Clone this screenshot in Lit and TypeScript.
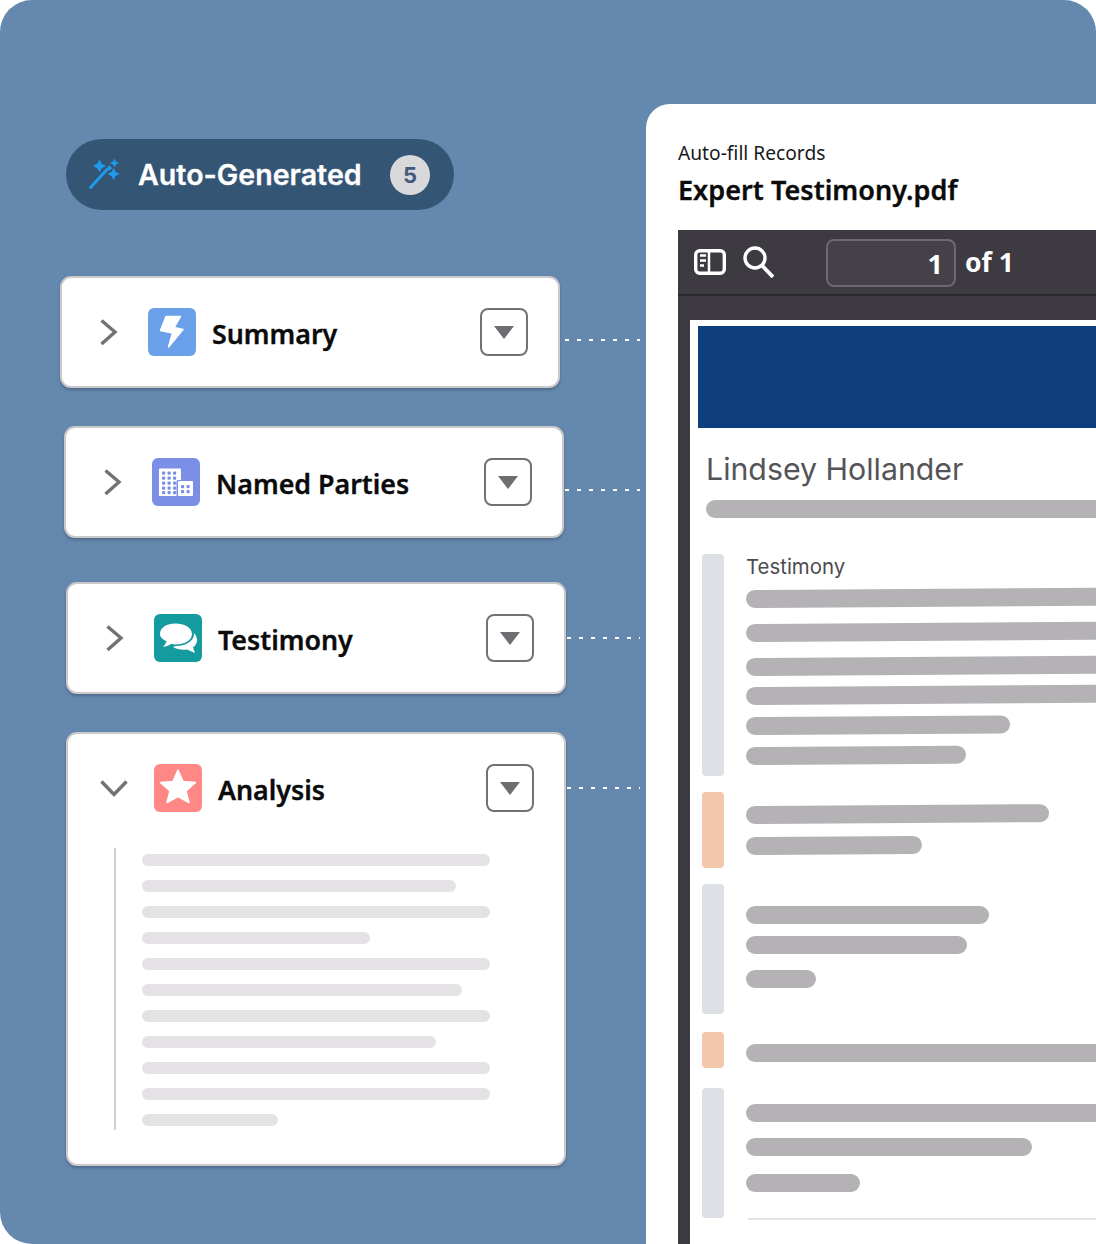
import { LitElement, html, css, svg } from "lit";
import { customElement } from "lit/decorators.js";

const chevR = svg`<svg width="32" height="48" viewBox="0 0 32 48"><path d="M9.500 12.500 23 24 9.500 36" fill="none" stroke="#737174" stroke-width="3.400"/></svg>`;
const chevD = svg`<svg width="32" height="48" viewBox="0 0 32 48"><path d="M3.500 17.500 16 30.500 28.500 17.500" fill="none" stroke="#737174" stroke-width="3.400"/></svg>`;
const bolt = svg`<svg width="48" height="48" viewBox="0 0 48 48"><rect width="48" height="48" rx="6" fill="#6a9fe9"/><path d="M18 8.500H32.500L26 19.500 35 21.500 20.500 39 24.500 25 12.500 22.500Z" fill="#fff" stroke="#fff" stroke-width="1.500" stroke-linejoin="round"/></svg>`;
const bldDots = (xs: number[], ys: number[]) => ys.flatMap((y) => xs.map((x) => svg`<rect x=${x} y=${y} width="3.200" height="3.200" rx="1" fill="#7b8fe6"/>`));
const bld = svg`<svg width="48" height="48" viewBox="0 0 48 48"><rect width="48" height="48" rx="6" fill="#7b8fe6"/><path d="M7 11.500a1 1 0 0 1 1-1H28a1 1 0 0 1 1 1V38H7Z" fill="#fff"/><rect x="24.500" y="22" width="17" height="17" rx="1.500" fill="#7b8fe6"/><rect x="26" y="23" width="15" height="15" rx="1" fill="#fff"/>${bldDots([10, 15.500, 21], [13.500, 18.500, 23.500, 28.500, 33])}${bldDots([29, 34.500], [27, 32])}</svg>`;
const chat = svg`<svg width="48" height="48" viewBox="0 0 48 48"><rect width="48" height="48" rx="6" fill="#149b9f"/><path d="M31 14C38 16 43 20.500 43 26 43 29 41.500 31.500 39 33.500L41 39 33 35.500C28 36 23 35.500 19 33 27 31 33 24 31 14Z" fill="#fff"/><path d="M22 8C31 8 40 12.500 40 20 40 27.500 31 32 22 32 20 32 19 32 17.500 31.500 15 33 12 34.500 6.500 34 8.500 32 10 30.500 10.500 28 7 26.500 4.500 23.500 4.500 20 4.500 12.500 13 8 22 8Z" fill="#149b9f"/><path d="M21.500 9.500C30 9.500 38 13.500 38 20 38 26.500 30 30.500 21.500 30.500 20 30.500 18.500 30.300 17 30 15 31.500 12.500 32.500 9 32.700 10.500 31.300 12 29.500 12.500 27 8.500 25.500 6 23 6 20 6 13.500 13 9.500 21.500 9.500Z" fill="#fff"/></svg>`;
const star = svg`<svg width="48" height="48" viewBox="0 0 48 48"><rect width="48" height="48" rx="6" fill="#ff8785"/><path d="M24 6 29 17.500 41.500 18.500 32 27 35 38.500 24 32.500 13 38.500 16 27 6.500 18.500 19 17.500Z" fill="#fff" stroke="#fff" stroke-width="1.500" stroke-linejoin="round"/></svg>`;
const wand = svg`<svg width="34" height="32" viewBox="0 0 34 32" fill="#1c9bef"><path d="M2.500 29.500 19 11.500" stroke="#1c9bef" stroke-width="3" stroke-linecap="round"/><path d="M11.500 1.500 13.800 5.700 18 8 13.800 10.300 11.500 14.500 9.200 10.300 5 8 9.200 5.700Z"/><path d="M26.500 .5 27.900 3.600 31 5 27.900 6.400 26.500 9.500 25.100 6.400 22 5 25.100 3.600Z"/><path d="M25.500 10 27.500 14 31.500 16 27.500 18 25.500 22 23.500 18 19.500 16 23.500 14Z"/><path d="M21.500 7 22.700 8.800 24.500 10 22.700 11.200 21.500 13 20.300 11.200 18.500 10 20.300 8.800Z"/></svg>`;

const cards = [
  { cls: "c1", name: "Summary", icon: bolt, dot: "d64 g5" },
  { cls: "c2", name: "Named Parties", icon: bld, dot: "d64 g1" },
  { cls: "c3", name: "Testimony", icon: chat, dot: "d56 g0" },
];
const skeleton = [348, 314, 348, 228, 348, 320, 348, 294, 348, 348, 136];

type Bar = { w?: number; m: number };
const blocks: { h: number; m: number; tone: string; tilt: boolean; pad: number; label?: string; bars: Bar[] }[] = [
  { h: 222, m: 0, tone: "grey", tilt: true, pad: 0, label: "Testimony", bars: [{ m: 10 }, { m: 16 }, { m: 16 }, { m: 11 }, { w: 264, m: 12 }, { w: 220, m: 12 }] },
  { h: 76, m: 16, tone: "peach", tilt: true, pad: 14, bars: [{ w: 303, m: 0 }, { w: 176, m: 13 }] },
  { h: 130, m: 16, tone: "grey", tilt: false, pad: 22, bars: [{ w: 243, m: 0 }, { w: 221, m: 12 }, { w: 70, m: 16 }] },
  { h: 36, m: 18, tone: "peach", tilt: false, pad: 12, bars: [{ m: 0 }] },
  { h: 130, m: 20, tone: "grey", tilt: false, pad: 16, bars: [{ m: 0 }, { w: 286, m: 16 }, { w: 114, m: 18 }] },
];

@customElement("app-root")
export class AppRoot extends LitElement {
  static styles = css`
    :host { display: block; width: 1096px; height: 1244px; background: #fff; overflow: hidden; }
    .stage { display: flex; width: 1096px; height: 1244px; background: #6589ae; border-radius: 32px 32px 0 32px; overflow: hidden; font-family: "Noto Sans", sans-serif; }
    .left { width: 646px; flex: none; box-sizing: border-box; padding: 139px 0 0 60px; display: flex; flex-direction: column; }
    .pill { margin: 0 0 66px 6px; width: 388px; height: 71px; box-sizing: border-box; border-radius: 36px; background: #355575; display: flex; align-items: center; padding-left: 22px; }
    .pill svg { flex: none; margin-top: -1px; }
    .pill-text { font: 600 28.600px Inter, sans-serif; -webkit-text-stroke: .3px #fff; color: #fff; margin-left: 16px; width: 252px; white-space: nowrap; }
    .count { width: 40px; height: 40px; border-radius: 50%; background: #d9d9dc; color: #45597a; font: 700 22px/40px Inter, sans-serif; text-align: center; }
    .row { display: flex; align-items: flex-start; }
    .c1 { margin-left: 0; }
    .c2 { margin: 38px 0 0 4px; }
    .c3 { margin: 44px 0 0 6px; }
    .c4 { margin: 38px 0 0 6px; }
    .card { width: 500px; box-sizing: border-box; background: #fff; border: 2px solid #cbcaca; border-radius: 11px; box-shadow: 0 2px 3px rgba(40,50,70,.35); padding: 30px 30px 0; flex: none; }
    .closed { height: 112px; }
    .open { height: 434px; }
    .head { display: flex; align-items: center; height: 48px; }
    .chev { width: 56px; flex: none; display: flex; }
    .ic { flex: none; display: flex; }
    .name { flex: 1; margin-left: 16px; font-size: 26.800px; font-weight: 600; -webkit-text-stroke: .35px #0b0b0c; color: #0b0b0c; padding-top: 4px; line-height: 44px; white-space: nowrap; }
    .btn { width: 48px; height: 48px; box-sizing: border-box; border: 2px solid #737174; border-radius: 8px; display: flex; align-items: center; justify-content: center; flex: none; }
    .tri { width: 0; height: 0; border-left: 10.500px solid transparent; border-right: 10.500px solid transparent; border-top: 13px solid #6f6d71; }
    .dots { height: 2px; flex: none; background: repeating-linear-gradient(90deg, #fff 0 4px, transparent 4px 12px); }
    .g5 { margin-left: 5px; width: 75px; }
    .g1 { margin-left: 1px; width: 75px; }
    .g0 { margin-left: 1px; width: 73px; }
    .d64 { margin-top: 63px; }
    .d56 { margin-top: 55px; }
    .skel { margin: 36px 0 0 16px; height: 282px; box-sizing: border-box; border-left: 2px solid #d0d0d0; padding: 6px 0 0 26px; display: flex; flex-direction: column; gap: 14px; }
    .skel div { height: 12px; border-radius: 6px; background: #e4e2e5; }
    .panel { flex: 1; margin-top: 104px; background: #fff; border-radius: 24px 0 0 0; padding: 36px 0 0 32px; overflow: hidden; }
    .sub { font-size: 19.200px; line-height: 26px; color: #1a1a1a; }
    .title { font-size: 27px; font-weight: 600; -webkit-text-stroke: .35px #0b0b0c; letter-spacing: .05px; line-height: 36px; color: #0b0b0c; margin-top: 6px; white-space: nowrap; }
    .viewer { margin-top: 22px; height: 1014px; background: #3d3b41; }
    .tools { height: 66px; box-sizing: border-box; border-bottom: 2px solid #2a292d; display: flex; align-items: center; padding-left: 16px; }
    .tools svg { flex: none; }
    .search { margin-left: 16px; }
    .input { margin-left: 52px; margin-top: 1px; width: 130px; height: 48px; box-sizing: border-box; border: 2px solid #6c6a70; border-radius: 8px; background: #444248; color: #fff; font-size: 27px; font-weight: 700; line-height: 46px; text-align: right; padding-right: 11px; }
    .of { margin-left: 9px; color: #fff; font-size: 26.500px; font-weight: 700; }
    .page { margin: 24px 0 0 12px; height: 924px; background: #fff; padding: 6px 0 0 8px; overflow: hidden; }
    .banner { height: 102px; background: #0f3e7f; }
    .person { margin: 23px 0 0 8px; font: 400 30.300px/36px Inter, sans-serif; color: #555458; white-space: nowrap; }
    .rule { margin: 13px 0 0 8px; height: 18px; border-radius: 9px 0 0 9px; background: #b4b2b5; }
    .blocks { margin: 36px 0 0 4px; }
    .block { display: flex; gap: 22px; }
    .sw { width: 22px; flex: none; border-radius: 4px; }
    .grey { background: #dde0e4; }
    .peach { background: #f3c7ac; }
    .col { flex: 1; min-width: 0; overflow: hidden; }
    .lab { font: 400 20.400px/26px Inter, sans-serif; color: #4c4b4f; }
    .bar { height: 18px; width: 500px; border-radius: 9px; background: #b4b2b5; }
    .tilt { transform: rotate(-0.36deg); transform-origin: left center; }
    .foot { margin: 0 0 0 46px; height: 2px; background: #e2e2e2; }
  `;

  render() {
    return html`<div class="stage">
      <div class="left">
        <div class="pill">${wand}<span class="pill-text">Auto-Generated</span><span class="count">5</span></div>
        ${cards.map((c) => html`<div class="row ${c.cls}">
          <div class="card closed"><div class="head">
            <span class="chev">${chevR}</span><span class="ic">${c.icon}</span><span class="name">${c.name}</span><span class="btn"><span class="tri"></span></span>
          </div></div>
          <div class="dots ${c.dot}"></div>
        </div>`)}
        <div class="row c4">
          <div class="card open">
            <div class="head"><span class="chev">${chevD}</span><span class="ic">${star}</span><span class="name">Analysis</span><span class="btn"><span class="tri"></span></span></div>
            <div class="skel">${skeleton.map((w) => html`<div style="width:${w}px"></div>`)}</div>
          </div>
          <div class="dots d56 g0"></div>
        </div>
      </div>
      <div class="panel">
        <div class="sub">Auto-fill Records</div>
        <div class="title">Expert Testimony.pdf</div>
        <div class="viewer">
          <div class="tools">
            <svg width="32" height="26" viewBox="0 0 32 26"><rect x="1.700" y="1.700" width="28.600" height="22.600" rx="4" fill="none" stroke="#fff" stroke-width="3.400"/><path d="M15 2V24" stroke="#fff" stroke-width="2.500"/><path d="M6 6.500H12M6 11.500H12M6 16.500H10" stroke="#fff" stroke-width="2.400"/></svg>
            <svg class="search" width="32" height="32" viewBox="0 0 32 32"><circle cx="13" cy="12" r="10" fill="none" stroke="#fff" stroke-width="3.400"/><path d="M20 19.500 31 31" stroke="#fff" stroke-width="3.800"/></svg>
            <div class="input">1</div>
            <div class="of">of 1</div>
          </div>
          <div class="page">
            <div class="banner"></div>
            <div class="person">Lindsey Hollander</div>
            <div class="rule"></div>
            <div class="blocks">
              ${blocks.map((b) => html`<div class="block" style="height:${b.h}px;margin-top:${b.m}px">
                <div class="sw ${b.tone}"></div>
                <div class="col" style="padding-top:${b.pad}px">
                  ${b.label ? html`<div class="lab">${b.label}</div>` : ""}
                  ${b.bars.map((r) => html`<div class="bar ${b.tilt ? "tilt" : ""}" style="margin-top:${r.m}px;${r.w ? `width:${r.w}px` : ""}"></div>`)}
                </div>
              </div>`)}
              <div class="foot"></div>
            </div>
          </div>
        </div>
      </div>
    </div>`;
  }
}
